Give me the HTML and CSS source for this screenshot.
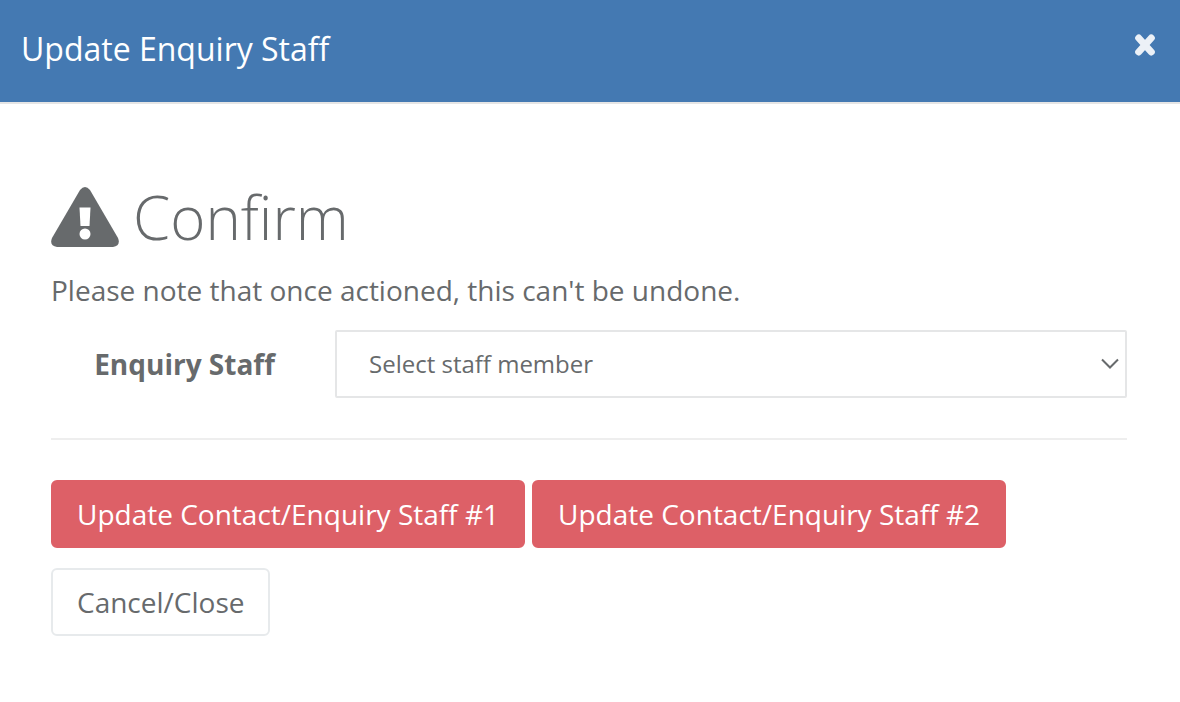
FILE: index.html
```
<!DOCTYPE html>
<html lang="en">
<head>
  <meta charset="UTF-8" />
  <meta name="viewport" content="width=device-width, initial-scale=1.0" />
  <title>Update Enquiry Staff</title>
  <link rel="stylesheet" href="styles.css">
</head>
<body>
  <header class="modal-header">
    <h1 class="modal-title">Update Enquiry Staff</h1>
    <button type="button" class="close" aria-label="Close">
      <svg width="20" height="22" viewBox="0 0 20 22" aria-hidden="true">
        <path d="M3.700 4L16.300 18M16.300 4L3.700 18" />
      </svg>
    </button>
  </header>

  <main class="modal-body">
    <h2 class="confirm">
      <svg width="68" height="60" viewBox="0 0 68 60" aria-hidden="true">
        <path class="triangle" d="M29 3Q34 -3 39 3L67 51Q70 59 62 60H6Q-2 59 1 51Z" />
        <path class="mark" d="M28.500 20.500H39.500L38.500 39H29.500Z" />
        <circle class="mark" cx="34" cy="47" r="5.500" />
      </svg>
      Confirm
    </h2>
    <p class="note">Please note that once actioned, this can't be undone.</p>

    <form>
      <div class="form-row">
        <label for="staff">Enquiry Staff</label>
        <div class="select-wrap">
          <select id="staff">
            <option>Select staff member</option>
          </select>
          <svg class="chevron" width="18" height="12" viewBox="0 0 18 12" aria-hidden="true">
            <path d="M1 1.500L9 9.500L17 1.500" />
          </svg>
        </div>
      </div>
      <hr>
      <div class="actions">
        <button type="button" class="btn btn-danger">Update Contact/Enquiry Staff #1</button>
        <button type="button" class="btn btn-danger">Update Contact/Enquiry Staff #2</button>
        <button type="button" class="btn btn-white">Cancel/Close</button>
      </div>
    </form>
  </main>
</body>
</html>
```
FILE: styles.css
```
* {
  box-sizing: border-box;
}
body {
  margin: 0;
  background: #fff;
  color: #676a6c;
  font-family: "Open Sans", "Noto Sans", sans-serif;
  font-size: 28px;
  line-height: 40px;
}
.modal-header {
  display: flex;
  justify-content: space-between;
  align-items: flex-start;
  padding: 27px 25px 31px 21px;
  background: #4479b2;
  border-bottom: 2px solid #e5e5e5;
}
.modal-title {
  margin: 0;
  font-size: 32px;
  font-weight: 400;
  line-height: 44px;
  color: #fff;
}
.close {
  display: flex;
  margin-top: 7px;
  padding: 0;
  border: 0;
  background: none;
  cursor: pointer;
}
.close path {
  fill: none;
  stroke: #ecf1f7;
  stroke-width: 7;
  stroke-linecap: round;
}
.modal-body {
  padding: 80px 53px 60px 51px;
}
.confirm {
  display: flex;
  align-items: center;
  gap: 14px;
  margin: 0;
  font-size: 60px;
  font-weight: 300;
  line-height: 66px;
}
.triangle {
  fill: #676a6c;
}
.mark {
  fill: #fff;
}
.note {
  margin: 20px 0;
}
.form-row {
  display: grid;
  grid-template-columns: 224px 1fr;
  gap: 60px;
  align-items: center;
}
.form-row label {
  font-weight: 700;
  text-align: right;
}
.select-wrap {
  position: relative;
}
select {
  display: block;
  width: 100%;
  height: 68px;
  padding: 0 32px 2px;
  border: 2px solid #e5e6e7;
  border-radius: 2px;
  background: #fff;
  color: inherit;
  font-family: inherit;
  font-size: 24px;
  appearance: none;
}
.chevron {
  position: absolute;
  top: 28px;
  right: 8px;
  fill: none;
  stroke: #676a6c;
  stroke-width: 2;
  pointer-events: none;
}
hr {
  margin: 40px 0;
  border: 0;
  border-top: 2px solid #eee;
}
.actions {
  display: flex;
  flex-wrap: wrap;
  gap: 20px 7px;
}
.btn {
  padding: 12px 24px;
  border: 2px solid;
  border-radius: 6px;
  font-family: inherit;
  font-size: 28px;
  line-height: 40px;
  cursor: pointer;
}
.btn-danger {
  background: #dd6067;
  border-color: #dd6067;
  color: #fff;
}
.btn-white {
  background: #fff;
  border-color: #e7eaec;
  color: inherit;
}
```
